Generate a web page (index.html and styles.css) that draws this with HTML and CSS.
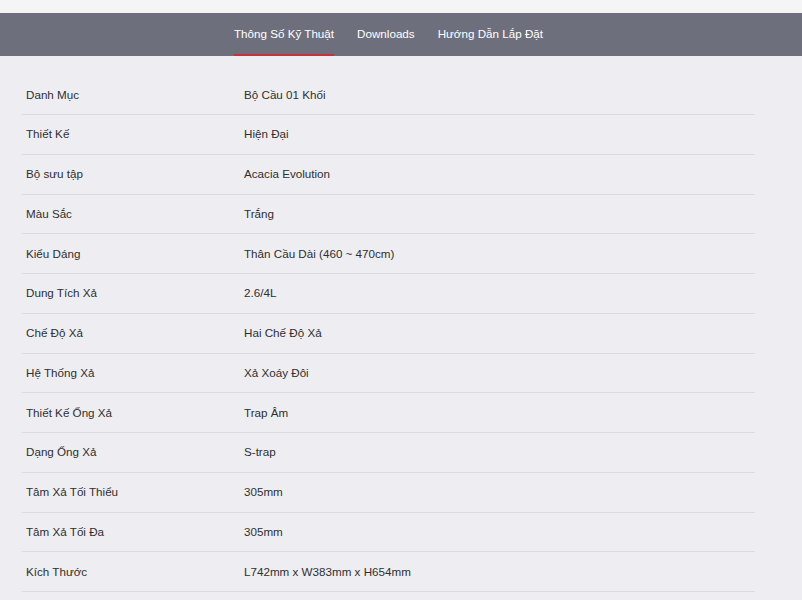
FILE: index.html
```html
<!DOCTYPE html>
<html lang="vi">
<head>
<meta charset="utf-8">
<link rel="stylesheet" href="styles.css">
</head>
<body>
<div class="top"></div>
<nav class="tabs">
  <div class="tabs-inner">
    <a class="tab active">Thông Số Kỹ Thuật</a>
    <a class="tab">Downloads</a>
    <a class="tab">Hướng Dẫn Lắp Đặt</a>
  </div>
</nav>
<main class="content">
  <div class="specs">
    <div class="row"><div class="k">Danh Mục</div><div class="v">Bộ Cầu 01 Khối</div></div>
    <div class="row"><div class="k">Thiết Kế</div><div class="v">Hiện Đại</div></div>
    <div class="row"><div class="k">Bộ sưu tập</div><div class="v">Acacia Evolution</div></div>
    <div class="row"><div class="k">Màu Sắc</div><div class="v">Trắng</div></div>
    <div class="row"><div class="k">Kiểu Dáng</div><div class="v">Thân Cầu Dài (460 ~ 470cm)</div></div>
    <div class="row"><div class="k">Dung Tích Xả</div><div class="v">2.6/4L</div></div>
    <div class="row"><div class="k">Chế Độ Xả</div><div class="v">Hai Chế Độ Xả</div></div>
    <div class="row"><div class="k">Hệ Thống Xả</div><div class="v">Xả Xoáy Đôi</div></div>
    <div class="row"><div class="k">Thiết Kế Ống Xả</div><div class="v">Trap Âm</div></div>
    <div class="row"><div class="k">Dạng Ống Xả</div><div class="v">S-trap</div></div>
    <div class="row"><div class="k">Tâm Xả Tối Thiểu</div><div class="v">305mm</div></div>
    <div class="row"><div class="k">Tâm Xả Tối Đa</div><div class="v">305mm</div></div>
    <div class="row"><div class="k">Kích Thước</div><div class="v">L742mm x W383mm x H654mm</div></div>
  </div>
</main>
</body>
</html>
```
FILE: styles.css
```css
* { box-sizing: border-box; }
html, body {
  margin: 0;
  padding: 0;
  background: #eeedf2;
  font-family: "Liberation Sans", Arial, sans-serif;
  font-size: 11.65px;
  color: #2f2f2f;
}
.top {
  height: 13px;
  background: #f5f5f5;
}
.tabs {
  height: 43px;
  background: #6e6f7c;
}
.tabs-inner {
  margin-left: 22px;
  width: 733px;
  height: 100%;
  display: flex;
  justify-content: center;
  gap: 23px;
}
.tab {
  display: flex;
  align-items: center;
  height: 100%;
  color: #ffffff;
  font-size: 11.65px;
  text-decoration: none;
  border-bottom: 2px solid transparent;
}
.tab.active {
  border-bottom-color: #c8303a;
}
.content {
  padding-top: 19.3px;
}
.specs {
  margin-left: 22px;
  width: 733px;
}
.row {
  display: flex;
  align-items: center;
  height: 39.75px;
  border-bottom: 1px solid #dcdbe2;
  padding: 0 4px 1px;
}
.k {
  width: 218px;
}
.v {
  flex: 1;
}
```
